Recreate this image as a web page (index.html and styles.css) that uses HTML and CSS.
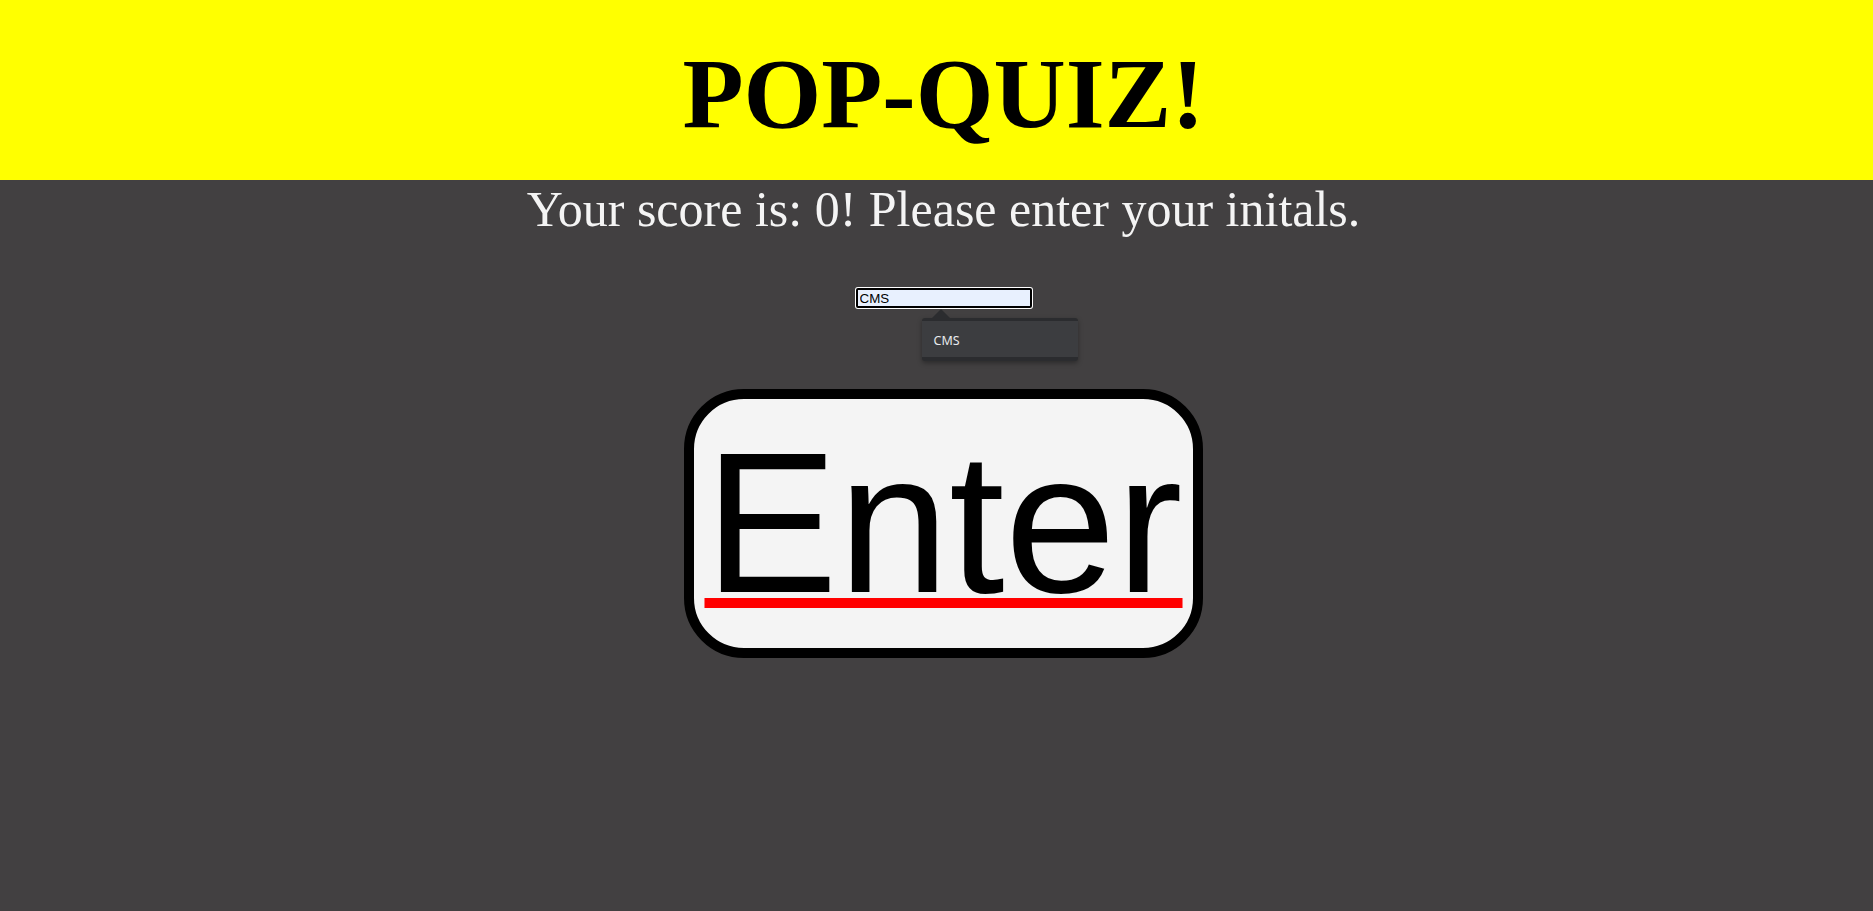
FILE: index.html
```html
<!DOCTYPE html>
<html lang="en">
<head>
<meta charset="utf-8">
<title>Pop-Quiz</title>
<link rel="stylesheet" href="styles.css">
</head>
<body>
<header class="banner">
  <h1 class="title">POP-QUIZ!</h1>
</header>
<main class="content">
  <p class="score">Your score is: 0! Please enter your initals.</p>
  <div class="field">
    <input class="initials" type="text" value="CMS">
    <div class="suggest">
      <span class="suggest-arrow"></span>
      <div class="suggest-item">CMS</div>
    </div>
  </div>
  <button class="enter" type="button"><span class="enter-label">Enter</span></button>
</main>
</body>
</html>
```
FILE: styles.css
```css
html {
  background: #424041;
}
body {
  margin: 0;
  background: #424041;
  min-height: 911px;
}
.banner {
  background: #ffff00;
  height: 180px;
  box-sizing: border-box;
  padding: 36px 0 0 14px;
  display: flex;
  justify-content: center;
}
.title {
  margin: 0;
  font-family: "Liberation Serif", "Times New Roman", serif;
  font-weight: bold;
  font-size: 100px;
  line-height: 115px;
  color: #000;
}
.content {
  display: flex;
  flex-direction: column;
  align-items: center;
  padding-left: 14px;
}
.score {
  margin: 2px 0 0 0;
  font-family: "Liberation Serif", "Times New Roman", serif;
  font-size: 50px;
  line-height: 55px;
  color: #f4f4f4;
}
.field {
  position: relative;
  margin-top: 51px;
  width: 176px;
  height: 20px;
}
.initials {
  display: block;
  box-sizing: border-box;
  width: 176px;
  height: 20px;
  margin: 0;
  padding: 0 2px;
  border: 2px solid #000;
  border-radius: 2px;
  box-shadow: 0 0 0 1px #ffffff;
  background: #e8f0fe;
  font-family: "Liberation Sans", Arial, sans-serif;
  font-size: 13.33px;
  color: #000;
  outline: none;
}
.suggest {
  position: absolute;
  left: 66px;
  top: 30px;
  width: 156px;
  height: 43px;
  box-sizing: border-box;
  background: #3c3d40;
  border-top: 3px solid #2b2c2f;
  border-bottom: 4px solid #2b2c2f;
  border-radius: 3px;
  box-shadow: 0 2px 5px rgba(0, 0, 0, 0.35);
}
.suggest-arrow {
  position: absolute;
  left: 10px;
  top: -12px;
  width: 0;
  height: 0;
  border-left: 9px solid transparent;
  border-right: 9px solid transparent;
  border-bottom: 9px solid #2b2c2f;
}
.suggest-item {
  padding: 12px 0 0 12px;
  font-family: "Noto Sans", "Open Sans", sans-serif;
  font-size: 12.5px;
  line-height: 16px;
  color: #e8eaed;
}
.enter {
  margin: 81px 0 0 0;
  padding: 9px 10px 10px 10px;
  border: 10px solid #000;
  border-radius: 60px;
  background: #f4f4f4;
  font-family: "Liberation Sans", Arial, sans-serif;
  font-size: 200px;
  line-height: 230px;
  color: #000;
  cursor: pointer;
}
.enter-label {
  text-decoration: underline;
  text-decoration-color: #ff0000;
  text-decoration-thickness: 10px;
  text-underline-offset: 6px;
  text-decoration-skip-ink: none;
}
```
